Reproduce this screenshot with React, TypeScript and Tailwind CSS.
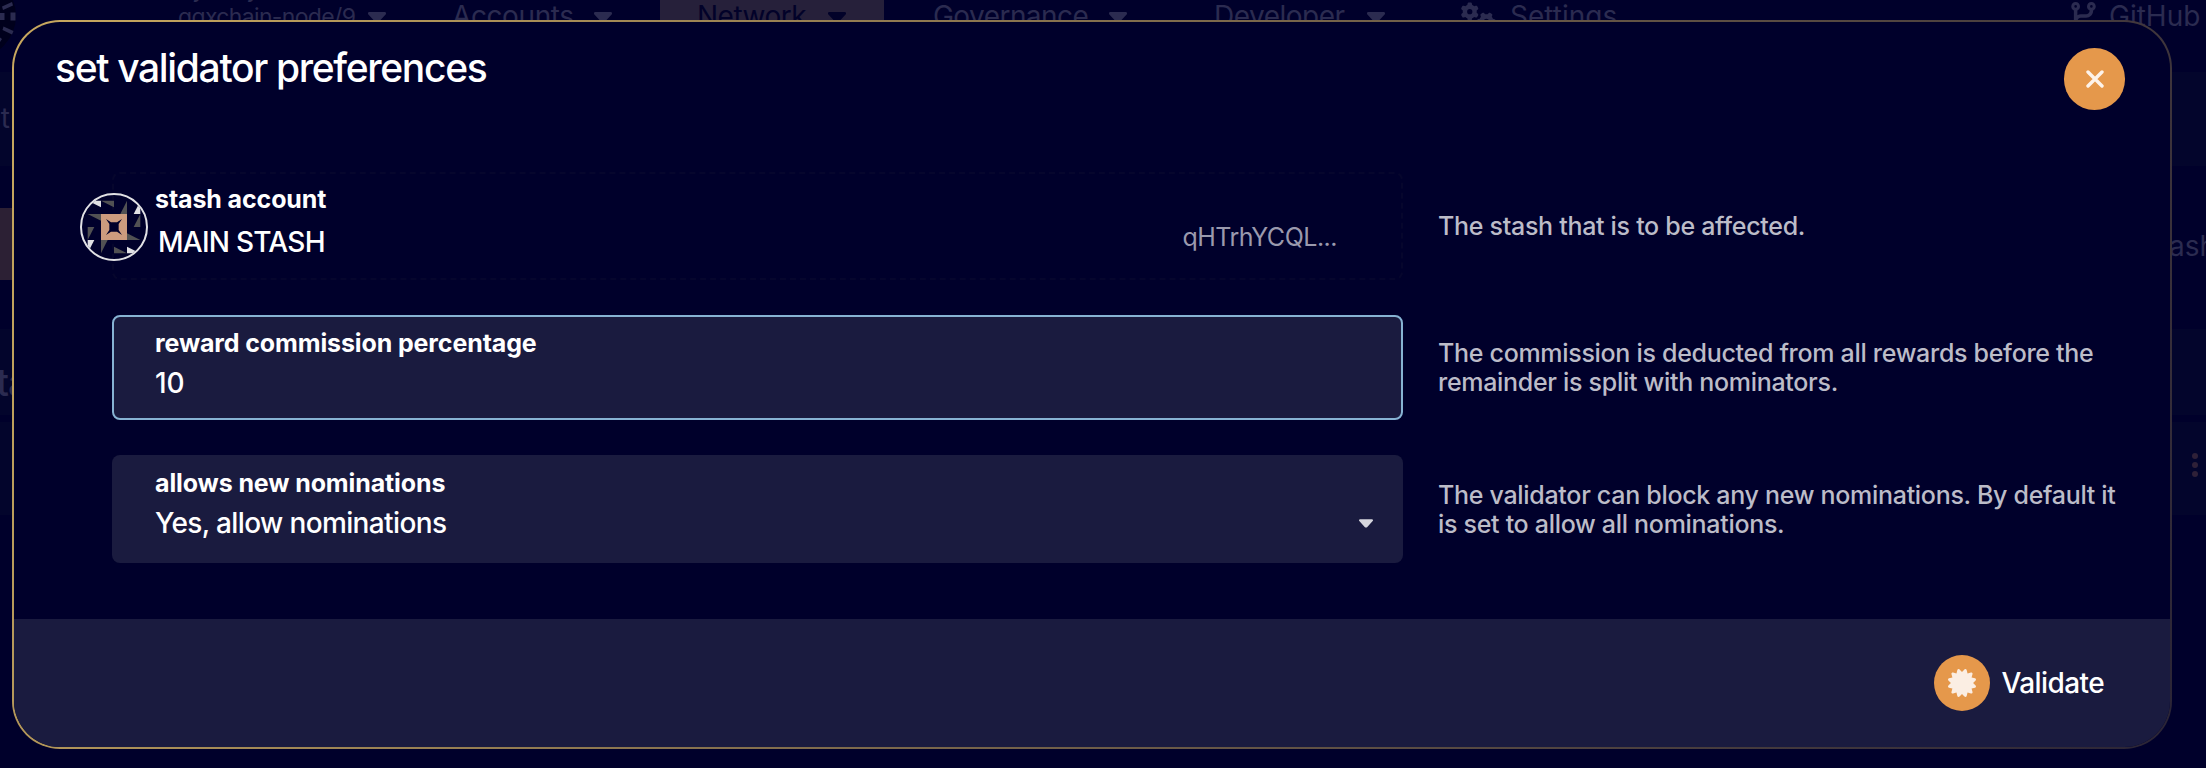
import React from 'react';
import { FaCertificate } from 'react-icons/fa';
import { FaCodeBranch, FaGears } from 'react-icons/fa6';

function Caret({ className }: { className: string }) {
  return (
    <svg viewBox="0 0 18 11" className={className} fill="currentColor">
      <path d="M1.4 0h15.2c1.3 0 1.9 1.5 1 2.4l-7.2 7.8c-.8.8-2 .8-2.8 0L.4 2.4C-.5 1.5.1 0 1.4 0z" />
    </svg>
  );
}

function Identicon() {
  return (
    <svg viewBox="0 0 204 204" className="-ml-[34px] mt-[19px] size-[68px] shrink-0">
      <defs>
        <clipPath id="disc">
          <circle cx="102" cy="102" r="97" />
        </clipPath>
      </defs>
      <g clipPath="url(#disc)">
        {[0, 90, 180, 270].map((a) => (
          <g key={a} transform={`rotate(${a} 102 102)`}>
            <path d="M24 23h39v20z" fill="#e0e0e4" />
            <path d="M63 23h39v20z" fill="#515153" />
            <path d="M141 23v40h-20z" fill="#515153" />
          </g>
        ))}
        <path d="M63 63h78v78H63z" fill="#cc9b7e" />
        <path d="M78 78l15 10h18l15-10-10 15v18l10 15-15-10H93l-15 10 10-15V93z" fill="#00002b" />
      </g>
      <circle cx="102" cy="102" r="99" fill="none" stroke="#e0e0e4" strokeWidth="6" />
    </svg>
  );
}

function Backdrop() {
  return (
    <div className="flex h-full flex-col text-[28px] text-[#2b2b50]">
      <div className="relative h-[72px] shrink-0 leading-[34px]">
        <svg viewBox="0 0 17 60" className="absolute left-0 top-0 h-[60px] w-[17px]">
          <circle cx="-26" cy="16" r="42" fill="#00001c" />
          <path
            fill="#2b2b50"
            d="M0 13h4.5v7H0zM10.5 12.5h5v8h-5zM2 6.5L12 2l1 3.500L3 10zM3.5 26.5l10 4.5-1.5 3.5L2.5 30zM0 37.5l2 1.5-2 3z"
          />
        </svg>
        <span className="absolute left-[177px] top-[-28px] text-[24px] tracking-[-0.3px]">Sydney</span>
        <span className="absolute left-[178px] top-0 text-[23px] tracking-[-0.65px]">ggxchain-node/9</span>
        <Caret className="absolute left-[368px] top-[12px] h-[11px] w-[18px]" />
        <span className="absolute left-[452px] top-[-1px] tracking-[-0.4px]">Accounts</span>
        <Caret className="absolute left-[594px] top-[12px] h-[11px] w-[18px]" />
        <div className="absolute left-[660px] top-0 h-[72px] w-[224px] bg-[#26203a] text-[#020229]">
          <span className="absolute left-[37px] top-[-1px] tracking-[-0.5px]">Network</span>
          <Caret className="absolute left-[168px] top-[12px] h-[11px] w-[18px]" />
        </div>
        <span className="absolute left-[933px] top-[-1px] tracking-[-0.55px]">Governance</span>
        <Caret className="absolute left-[1109px] top-[12px] h-[11px] w-[18px]" />
        <span className="absolute left-[1214px] top-[-1px] tracking-[-0.5px]">Developer</span>
        <Caret className="absolute left-[1367px] top-[12px] h-[11px] w-[18px]" />
        <FaGears className="absolute left-[1461px] top-[2px] h-[28px] w-[35px]" />
        <span className="absolute left-[1510px] top-[-1px]">Settings</span>
        <FaCodeBranch className="absolute left-[2071px] top-[2px] h-[28px] w-[25px]" />
        <span className="absolute left-[2109px] top-[-1px]">GitHub</span>
      </div>
      <div className="h-[94px] shrink-0 bg-[#03052c] pt-[29px] leading-[34px]">
        <span className="-ml-[14px]">st</span>
      </div>
      <div className="flex h-[163px] shrink-0 items-start justify-between pt-[42px] leading-[34px]">
        <div className="h-[72px] w-[14px] bg-[#2c2034]" />
        <span className="mt-[21px] w-[37px]">ash</span>
      </div>
      <div className="h-[86px] shrink-0 bg-[#03052c] pt-[32px] text-[38px] font-medium leading-[42px]">
        <span className="-ml-[4px] tracking-[-1px]">ta</span>
      </div>
      <div className="mt-[7px] flex h-[93px] shrink-0 items-center justify-end bg-[#03052c] pr-[8px]">
        <svg viewBox="0 0 6 24" className="mb-[7px] h-[24px] w-[6px]" fill="#2f2138">
          <circle cx="3" cy="3" r="3" />
          <circle cx="3" cy="12" r="3" />
          <circle cx="3" cy="21" r="3" />
        </svg>
      </div>
    </div>
  );
}

function Row({ help, children }: { help: string; children: React.ReactNode }) {
  return (
    <div className="flex items-center gap-[35px]">
      {children}
      <p className="w-[700px] whitespace-pre-line pt-px text-[25px] font-medium leading-[29px] tracking-[-0.3px] text-[#bcbcc8]">
        {help}
      </p>
    </div>
  );
}

function Label({ children }: { children: string }) {
  return <div className="w-fit text-[25px] font-bold leading-[30px] tracking-[-0.12px]">{children}</div>;
}

export default function App() {
  return (
    <div className="relative h-[768px] w-[2206px] overflow-hidden bg-[#00002b] font-['Inter',sans-serif] text-white">
      <Backdrop />
      <div className="absolute left-[12px] top-[20px] h-[729px] w-[2160px] rounded-[48px] bg-[linear-gradient(115deg,#c9a95f,#2a2436)] p-[2px]">
        <div className="flex h-full flex-col overflow-hidden rounded-[46px] bg-[#00002b]">
          <header className="flex h-[150px] shrink-0 justify-between pl-[41px] pr-[45px]">
            <h1 className="h-fit pt-[22px] text-[39px] font-medium leading-[48px] tracking-[-1.34px]">
              set validator preferences
            </h1>
            <button className="mt-[26px] flex h-[62px] w-[61px] items-center justify-center rounded-full bg-[#e5984b]">
              <svg
                viewBox="0 0 18 18"
                className="size-[18px]"
                stroke="#fdf3ea"
                strokeWidth="3.4"
                strokeLinecap="round"
              >
                <path d="M2 2l14 14M16 2L2 16" />
              </svg>
            </button>
          </header>
          <main className="flex h-[447px] shrink-0 flex-col gap-[35px] pl-[98px]">
            <Row help="The stash that is to be affected.">
              <div className="flex h-[108px] w-[1291px] rounded-[8px] border-2 border-dashed border-[#06062d]">
                <Identicon />
                <div className="ml-[7px] flex-1 pt-[10px]">
                  <Label>stash account</Label>
                  <div className="ml-[3px] mt-[11px] w-fit text-[28px] font-medium leading-[34px] tracking-[-0.75px]">
                    MAIN STASH
                  </div>
                </div>
                <div className="mr-[64px] mt-[48px] h-fit text-[25px] leading-[30px] tracking-[-0.5px] text-[#9a99ad]">
                  qHTrhYCQL...
                </div>
              </div>
            </Row>
            <Row help={'The commission is deducted from all rewards before the\nremainder is split with nominators.'}>
              <div className="h-[105px] w-[1291px] rounded-[8px] border-2 border-[#87b3d3] bg-[#1a1b3f] pl-[41px] pt-[11px]">
                <Label>reward commission percentage</Label>
                <div className="mt-[8px] w-fit text-[28px] font-medium leading-[34px]">10</div>
              </div>
            </Row>
            <Row help={'The validator can block any new nominations. By default it\nis set to allow all nominations.'}>
              <div className="h-[108px] w-[1291px] rounded-[8px] bg-[#1a1b3f] pl-[43px] pr-[30px] pt-[13px]">
                <Label>allows new nominations</Label>
                <div className="mt-[8px] flex items-center justify-between">
                  <span className="text-[28px] font-medium leading-[34px] tracking-[-0.63px]">
                    Yes, allow nominations
                  </span>
                  <Caret className="mt-px h-[9px] w-[14px] text-[#d6d6dd]" />
                </div>
              </div>
            </Row>
          </main>
          <footer className="flex flex-1 items-center justify-end gap-[12px] bg-[#1a1b3f] pr-[66px]">
            <span className="flex size-[56px] shrink-0 items-center justify-center rounded-full bg-[#e5984b]">
              <FaCertificate className="size-[28px] text-[#fbeee3]" />
            </span>
            <span className="text-[28px] font-medium leading-[34px] tracking-[-0.6px]">Validate</span>
          </footer>
        </div>
      </div>
    </div>
  );
}
